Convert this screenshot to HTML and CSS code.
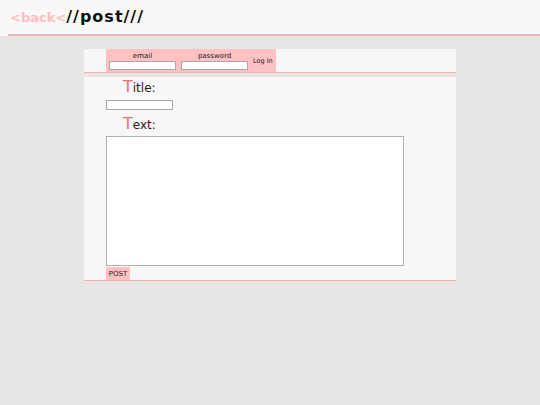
FILE: index.html
```html
<!DOCTYPE html>
<html>
<head>
<meta charset="utf-8">
<title>post</title>
<link rel="stylesheet" href="styles.css">
</head>
<body>
<header class="topbar">
  <div class="topbar-inner"><a class="back" href="#">&lt;back&lt;</a><span class="crumb">//post///</span></div>
</header>
<main class="wrap">
  <div class="login-bar">
    <form class="login">
      <label class="field"><span class="field-name">email</span><input class="small-input" type="text"></label>
      <label class="field"><span class="field-name">password</span><input class="small-input" type="password"></label>
      <button class="login-btn" type="button">Log In</button>
    </form>
  </div>
  <section class="post-panel">
    <div class="label"><span class="cap">T</span>itle:</div>
    <input class="title-input" type="text">
    <div class="label"><span class="cap">T</span>ext:</div>
    <textarea class="text-input"></textarea>
    <button class="post-btn" type="button">POST</button>
  </section>
</main>
</body>
</html>
```
FILE: styles.css
```css
html, body {
  margin: 0;
  padding: 0;
}
body {
  background: #e8e6e4;
  font-family: "DejaVu Sans", Verdana, sans-serif;
  color: #222;
}
.topbar {
  background: #f8f8f8;
}
.topbar-inner {
  margin-left: 8px;
  padding-left: 2px;
  height: 34px;
  line-height: 34px;
  border-bottom: 2px solid #e9b4b4;
  font-weight: bold;
  font-size: 16px;
  white-space: nowrap;
}
.back {
  font-size: 13px;
  line-height: 1;
  color: #ffbfbf;
  text-decoration: none;
}
.crumb {
  color: #111;
  letter-spacing: 1px;
}
.wrap {
  width: 372px;
  margin: 13px auto 0;
}
.login-bar {
  display: flex;
  background: #f7f7f7;
  height: 23px;
  border-bottom: 1px solid #e9b4b4;
  padding-left: 22px;
}
.login {
  display: flex;
  align-items: center;
  height: 23px;
  background: #ffc1c1;
  padding: 0 3px;
  gap: 5px;
  margin: 0;
}
.field {
  display: flex;
  flex-direction: column;
  align-items: center;
}
.field-name {
  font-size: 7px;
  line-height: 8px;
  color: #222;
}
.small-input {
  box-sizing: border-box;
  width: 67px;
  height: 9px;
  margin: 1px 0 0;
  padding: 0;
  border: 1px solid #a8a8a8;
  background: #fff;
}
.login-btn {
  background: none;
  border: 0;
  padding: 0;
  margin: 0;
  font-family: "DejaVu Sans", sans-serif;
  font-size: 6.5px;
  color: #222;
}
.post-panel {
  margin-top: 4px;
  background: #f7f7f7;
  padding-left: 22px;
  border-bottom: 1px solid #e9b4b4;
}
.label {
  height: 21px;
  line-height: 20px;
  font-size: 12px;
  padding-left: 17px;
  color: #222;
}
.cap {
  font-size: 16px;
  line-height: 20px;
  color: #ee7070;
}
.title-input {
  display: block;
  box-sizing: border-box;
  width: 67px;
  height: 10px;
  margin: 2px 0 4px;
  padding: 0;
  border: 1px solid #a8a8a8;
  background: #fff;
}
.text-input {
  display: block;
  box-sizing: border-box;
  width: 298px;
  height: 130px;
  margin: 1px 0 1px;
  padding: 0;
  border: 1px solid #b0b0b0;
  background: #fff;
  resize: none;
}
.post-btn {
  display: block;
  width: 24px;
  height: 13px;
  margin: 0;
  padding: 0;
  border: 0;
  background: #ffc1c1;
  font-family: "DejaVu Sans", sans-serif;
  font-size: 7px;
  color: #222;
}
```
